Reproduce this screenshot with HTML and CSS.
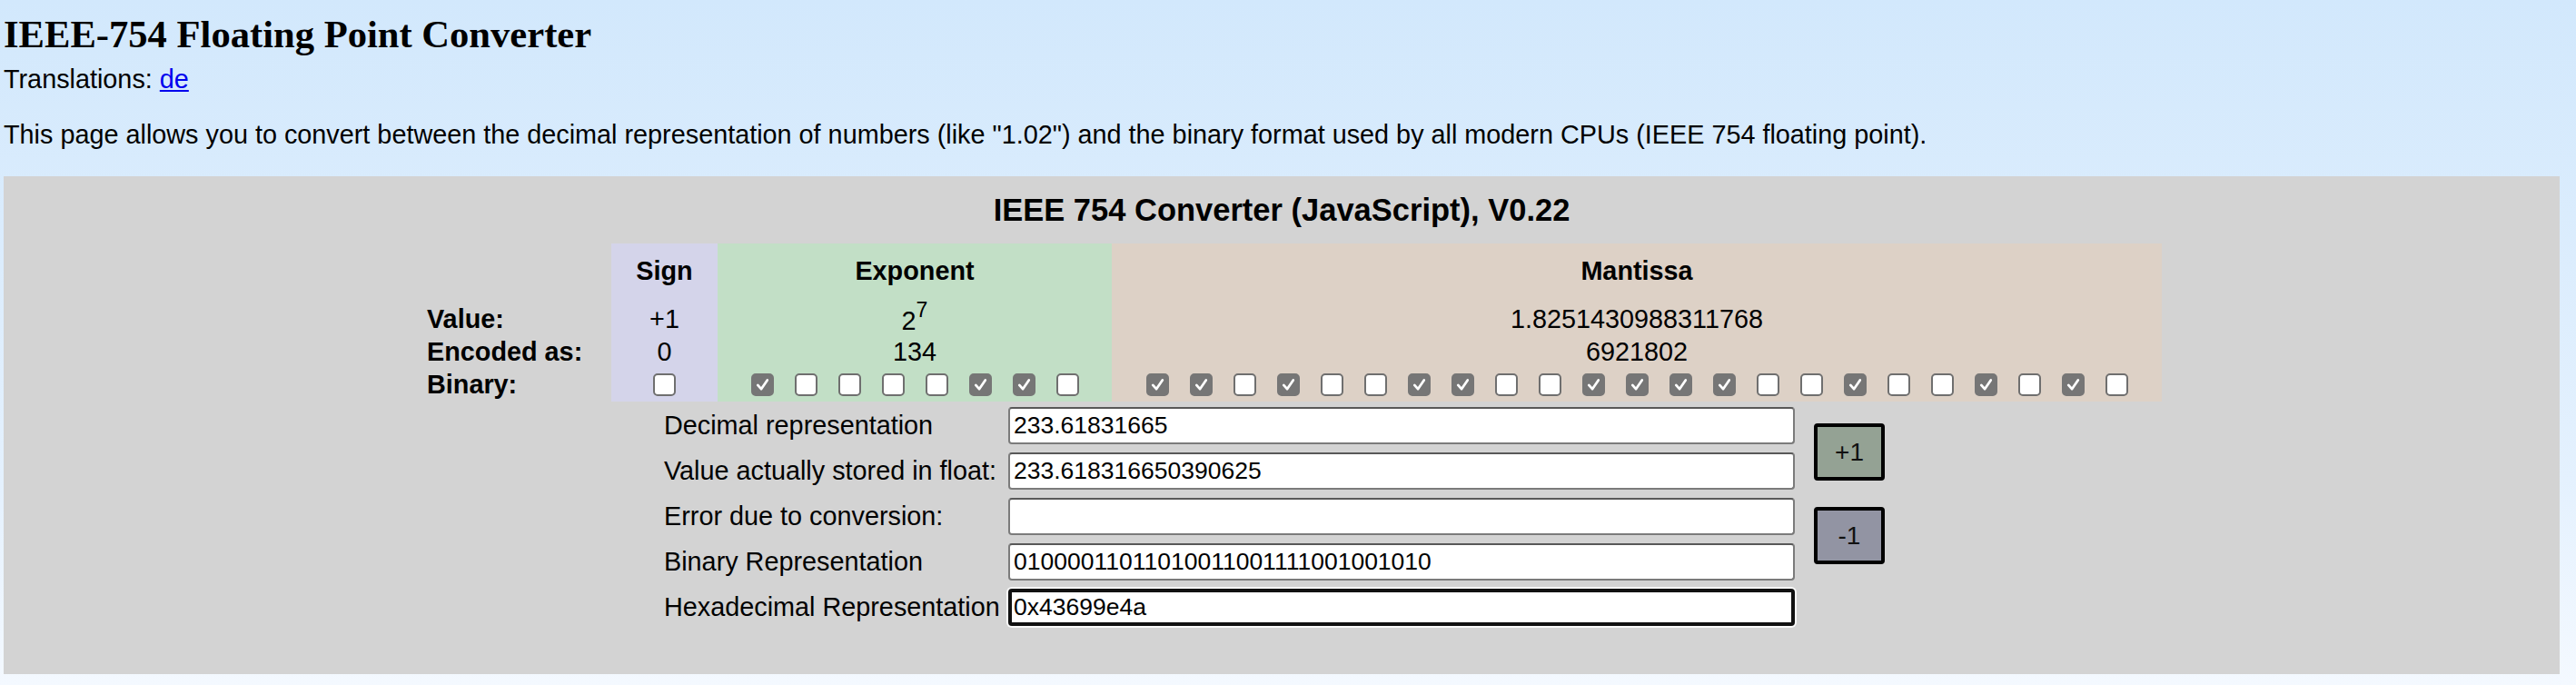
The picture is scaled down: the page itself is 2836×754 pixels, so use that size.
FILE: index.html
```html
<!DOCTYPE html>
<html lang="en">
<head>
<meta charset="utf-8">
<title>IEEE-754 Floating Point Converter</title>
<link rel="stylesheet" href="styles.css">
</head>
<body>
<h1 class="title">IEEE-754 Floating Point Converter</h1>
<div class="translations">Translations: <a href="#" class="link">de</a></div>
<p class="intro">This page allows you to convert between the decimal representation of numbers (like "1.02") and the binary format used by all modern CPUs (IEEE 754 floating point).</p>

<div class="converter">
  <h3 class="conv-title">IEEE 754 Converter (JavaScript), V0.22</h3>
  <table class="bits">
    <colgroup><col class="c-lbl"><col class="c-sign"><col class="c-exp"><col class="c-man"></colgroup>
    <tr class="r-head">
      <td class="lbl"></td>
      <th class="sign">Sign</th>
      <th class="exp">Exponent</th>
      <th class="man">Mantissa</th>
    </tr>
    <tr class="r-val">
      <td class="lbl">Value:</td>
      <td class="sign">+1</td>
      <td class="exp exp-val">2<sup class="sup">7</sup></td>
      <td class="man">1.8251430988311768</td>
    </tr>
    <tr class="r-enc">
      <td class="lbl">Encoded as:</td>
      <td class="sign">0</td>
      <td class="exp">134</td>
      <td class="man">6921802</td>
    </tr>
    <tr class="r-bin">
      <td class="lbl">Binary:</td>
      <td class="sign"><div class="boxes"><span class="bit"></span></div></td>
      <td class="exp"><div class="boxes">
        <span class="bit on"><svg viewBox="0 0 26 26"><path d="M6.5 13.5 L11.2 18.8 L19.5 6.8"/></svg></span>
        <span class="bit"></span>
        <span class="bit"></span>
        <span class="bit"></span>
        <span class="bit"></span>
        <span class="bit on"><svg viewBox="0 0 26 26"><path d="M6.5 13.5 L11.2 18.8 L19.5 6.8"/></svg></span>
        <span class="bit on"><svg viewBox="0 0 26 26"><path d="M6.5 13.5 L11.2 18.8 L19.5 6.8"/></svg></span>
        <span class="bit"></span>
      </div></td>
      <td class="man"><div class="boxes">
        <span class="bit on"><svg viewBox="0 0 26 26"><path d="M6.5 13.5 L11.2 18.8 L19.5 6.8"/></svg></span>
        <span class="bit on"><svg viewBox="0 0 26 26"><path d="M6.5 13.5 L11.2 18.8 L19.5 6.8"/></svg></span>
        <span class="bit"></span>
        <span class="bit on"><svg viewBox="0 0 26 26"><path d="M6.5 13.5 L11.2 18.8 L19.5 6.8"/></svg></span>
        <span class="bit"></span>
        <span class="bit"></span>
        <span class="bit on"><svg viewBox="0 0 26 26"><path d="M6.5 13.5 L11.2 18.8 L19.5 6.8"/></svg></span>
        <span class="bit on"><svg viewBox="0 0 26 26"><path d="M6.5 13.5 L11.2 18.8 L19.5 6.8"/></svg></span>
        <span class="bit"></span>
        <span class="bit"></span>
        <span class="bit on"><svg viewBox="0 0 26 26"><path d="M6.5 13.5 L11.2 18.8 L19.5 6.8"/></svg></span>
        <span class="bit on"><svg viewBox="0 0 26 26"><path d="M6.5 13.5 L11.2 18.8 L19.5 6.8"/></svg></span>
        <span class="bit on"><svg viewBox="0 0 26 26"><path d="M6.5 13.5 L11.2 18.8 L19.5 6.8"/></svg></span>
        <span class="bit on"><svg viewBox="0 0 26 26"><path d="M6.5 13.5 L11.2 18.8 L19.5 6.8"/></svg></span>
        <span class="bit"></span>
        <span class="bit"></span>
        <span class="bit on"><svg viewBox="0 0 26 26"><path d="M6.5 13.5 L11.2 18.8 L19.5 6.8"/></svg></span>
        <span class="bit"></span>
        <span class="bit"></span>
        <span class="bit on"><svg viewBox="0 0 26 26"><path d="M6.5 13.5 L11.2 18.8 L19.5 6.8"/></svg></span>
        <span class="bit"></span>
        <span class="bit on"><svg viewBox="0 0 26 26"><path d="M6.5 13.5 L11.2 18.8 L19.5 6.8"/></svg></span>
        <span class="bit"></span>
      </div></td>
    </tr>
  </table>

  <div class="form">
    <label class="flbl">Decimal representation</label>
    <input class="field" type="text" value="233.61831665">
    <button class="step plus" type="button">+1</button>
    <label class="flbl">Value actually stored in float:</label>
    <input class="field" type="text" value="233.618316650390625">
    <label class="flbl">Error due to conversion:</label>
    <input class="field" type="text" value="">
    <button class="step minus" type="button">-1</button>
    <label class="flbl">Binary Representation</label>
    <input class="field" type="text" value="01000011011010011001111001001010">
    <label class="flbl">Hexadecimal Representation</label>
    <input class="field focused" type="text" value="0x43699e4a">
  </div>
</div>
</body>
</html>
```
FILE: styles.css
```css
html {
  background: linear-gradient(to bottom, #d2e8fc 0%, #e4f1fe 70%, #f4f9ff 100%);
  min-height: 100%;
}
body {
  margin: 0 18px 0 4px;
  font-family: "Liberation Sans", Arial, Helvetica, sans-serif;
  font-size: 28.8px;
  color: #000;
}
.title {
  font-family: "Liberation Serif", "Times New Roman", serif;
  font-weight: bold;
  font-size: 42.6px;
  line-height: 50px;
  margin: 13px 0 7.5px 0;
}
.translations {
  line-height: 33px;
}
.link {
  color: #0000ee;
  text-decoration: underline;
}
.intro {
  line-height: 33px;
  margin: 28px 0 29.5px 0;
}
.converter {
  background: #d3d3d3;
  padding: 17px 0 53px 0;
}
.conv-title {
  margin: 0;
  text-align: center;
  font-size: 34.5px;
  line-height: 40px;
  font-weight: bold;
}
.bits {
  margin: 17px 0 0 462px;
  border-collapse: collapse;
  border-spacing: 0;
  table-layout: fixed;
  width: 1914px;
}
.c-lbl { width: 207px; }
.c-sign { width: 117px; }
.c-exp { width: 434px; }
.c-man { width: 1156px; }
.bits td, .bits th {
  padding: 0;
  text-align: center;
  line-height: 33px;
  vertical-align: middle;
}
.bits .lbl {
  text-align: left;
  padding-left: 4px;
  font-weight: bold;
}
.bits th {
  font-weight: bold;
  vertical-align: top;
  padding-top: 14px;
}
.r-head { height: 65px; }
.r-val { height: 37px; }
.r-enc { height: 35px; }
.r-bin { height: 37px; }
.sign { background: #d4d4ea; }
.exp { background: #c2dfc6; }
.man { background: #ddd1c6; }
.bits .exp-val {
  vertical-align: bottom;
}
.sup {
  font-size: 0.8em;
  line-height: 0;
  vertical-align: 0.6em;
}
.boxes {
  display: flex;
  justify-content: center;
  align-items: center;
  gap: 23px;
}
.bit {
  box-sizing: border-box;
  width: 25px;
  height: 25px;
  border: 2px solid #6f6f6f;
  border-radius: 5px;
  background: #fff;
  display: block;
}
.bit.on {
  background: #767676;
  border-color: #767676;
}
.bit svg {
  display: block;
  width: 21px;
  height: 21px;
  fill: none;
  stroke: #fff;
  stroke-width: 3.4;
  stroke-linecap: round;
  stroke-linejoin: round;
}
.form {
  margin: 6px 0 0 727px;
  display: grid;
  grid-template-columns: 379px 866px 99px;
  grid-auto-rows: 41px;
  row-gap: 9px;
}
.flbl {
  grid-column: 1;
  align-self: center;
  line-height: 33px;
  white-space: nowrap;
}
.field {
  grid-column: 2;
  box-sizing: border-box;
  height: 41px;
  width: 866px;
  margin: 0;
  padding: 0 4px;
  border: 2px solid #7b7b7b;
  border-top-color: #585858;
  border-radius: 4px;
  background: #fff;
  font-family: "Liberation Sans", Arial, Helvetica, sans-serif;
  font-size: 26.5px;
  color: #000;
  outline: none;
}
.field.focused {
  border: 4px solid #111;
  padding: 0 2px;
  box-shadow: 0 0 0 2px #fafafa;
}
.step {
  grid-column: 3;
  justify-self: end;
  align-self: start;
  box-sizing: border-box;
  width: 78px;
  height: 63px;
  border: 4px solid #000;
  border-radius: 4px;
  font-family: "Liberation Sans", Arial, Helvetica, sans-serif;
  font-size: 28px;
  color: #111;
  padding: 0;
}
.plus {
  grid-row: 1 / span 2;
  margin-top: 18px;
  background: #94a294;
}
.minus {
  grid-row: 3 / span 2;
  margin-top: 10px;
  background: #9294a3;
}
```
